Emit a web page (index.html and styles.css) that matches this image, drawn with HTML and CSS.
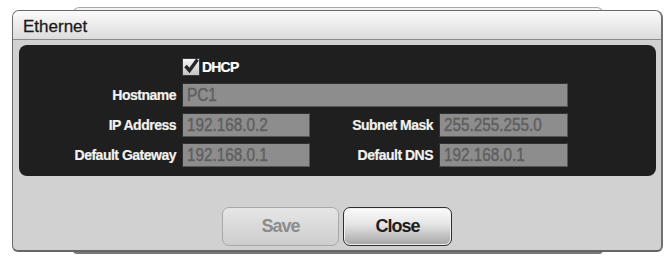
FILE: index.html
```html
<!DOCTYPE html>
<html>
<head>
<meta charset="utf-8">
<link rel="stylesheet" href="styles.css">
</head>
<body>
<div class="desk">
  <div class="backwin"></div>
  <div class="dialog">
    <div class="title">Ethernet</div>
    <div class="body">
      <div class="panel">
        <div class="chk-row">
          <span class="chk">
            <svg width="19" height="19" viewBox="0 0 19 19"><path d="M3.5 9 L7.5 13.5 L15.5 2.5" fill="none" stroke="#262626" stroke-width="3.4" stroke-linejoin="miter"/></svg>
          </span>
          <span class="chk-label">DHCP</span>
        </div>
        <div class="lbl">Hostname</div>
        <div class="field wide"><span class="val">PC1</span></div>
        <div class="lbl">IP Address</div>
        <div class="field"><span class="val">192.168.0.2</span></div>
        <div class="lbl">Subnet Mask</div>
        <div class="field"><span class="val">255.255.255.0</span></div>
        <div class="lbl">Default Gateway</div>
        <div class="field"><span class="val">192.168.0.1</span></div>
        <div class="lbl">Default DNS</div>
        <div class="field"><span class="val">192.168.0.1</span></div>
      </div>
      <div class="buttons">
        <button class="btn save">Save</button>
        <button class="btn close">Close</button>
      </div>
    </div>
  </div>
</div>
</body>
</html>
```

FILE: styles.css
```css
html, body {
  margin: 0;
  padding: 0;
  background: #ffffff;
  font-family: "Liberation Sans", Arial, sans-serif;
}
.desk {
  position: relative;
  width: 671px;
  height: 266px;
  padding-top: 10px;
  box-sizing: border-box;
}
.backwin {
  position: absolute;
  left: 73px;
  top: 7px;
  width: 530px;
  height: 247px;
  box-sizing: border-box;
  border: 1px solid #9a9a9a;
  border-top-color: #a8a8a8;
  border-bottom: 2px solid #777;
  border-radius: 6px 6px 4px 4px;
  background: #f4f4f4;
}
.dialog {
  position: relative;
  margin-left: 12px;
  width: 651px;
  height: 242px;
  box-sizing: border-box;
  border: 1px solid #6a6a6a;
  border-right: 2px solid #707070;
  border-bottom: 2px solid #666;
  border-radius: 7px 8px 6px 6px;
  background: #d1d1d1;
  display: flex;
  flex-direction: column;
  overflow: hidden;
}
.title {
  height: 29px;
  box-sizing: border-box;
  border-bottom: 1px solid #8a8a8a;
  background: linear-gradient(#fbfbfb, #dcdcdc);
  color: #1a1a1a;
  font-size: 17px;
  padding-left: 10px;
  padding-top: 7px;
  line-height: 18px;
  -webkit-text-stroke: 0.3px #1a1a1a;
}
.body {
  flex: 1;
  padding: 5px 5px 0 6px;
  display: flex;
  flex-direction: column;
}
.panel {
  background: #1f1f1f;
  border-radius: 8px;
  height: 131px;
  box-sizing: border-box;
  padding: 11px 0 0 0;
  display: grid;
  grid-template-columns: 157px 128px 117px 129px;
  grid-template-rows: 21px 24px 24px 24px;
  column-gap: 6px;
  row-gap: 6px;
  align-items: center;
}
.chk-row {
  grid-column: 2 / 5;
  display: flex;
  align-items: center;
}
.chk {
  width: 18px;
  height: 18px;
  box-sizing: border-box;
  border: 1px solid #3a3a3a;
  background: linear-gradient(#f6f6f6, #c4c4c4);
  position: relative;
}
.chk svg {
  position: absolute;
  left: -1px;
  top: -2px;
}
.chk-label {
  color: #ffffff;
  font-weight: bold;
  font-size: 14px;
  letter-spacing: -0.8px;
  margin-left: 2px;
  -webkit-text-stroke: 0.2px #ffffff;
}
.panel .lbl {
  text-align: right;
  color: #f2f2f2;
  font-weight: bold;
  font-size: 14px;
  letter-spacing: -0.5px;
  white-space: nowrap;
  -webkit-text-stroke: 0.2px #f2f2f2;
}
.field {
  height: 24px;
  box-sizing: border-box;
  background: #8d8d8d;
  border: 1px solid #303030;
  border-right-color: #555;
  border-bottom-color: #555;
  color: #5f5f5f;
  font-size: 18px;
  line-height: 22px;
  padding-left: 4px;
  white-space: nowrap;
  overflow: hidden;
  -webkit-text-stroke: 0.45px #5f5f5f;
}
.val {
  display: inline-block;
  transform: scaleX(0.85);
  transform-origin: left center;
}
.field.wide {
  grid-column: 2 / 5;
}
.buttons {
  display: flex;
  justify-content: center;
  gap: 4px;
  margin-top: 31px;
  padding-right: 1px;
}
.btn {
  height: 39px;
  border-radius: 7px;
  font-family: "Liberation Sans", Arial, sans-serif;
  font-weight: bold;
  font-size: 18px;
  letter-spacing: -1px;
  padding: 0;
  margin: 0;
}
.save {
  width: 117px;
  border: 1px solid #a8a8a8;
  background: linear-gradient(#e6e6e6, #cdcdcd);
  color: #8c8c8c;
}
.close {
  width: 109px;
  border: 1px solid #2e2e2e;
  background: linear-gradient(#fcfcfc, #e4e4e4 45%, #a5a5a5);
  color: #1c1c1c;
  box-shadow: inset 0 0 0 1px #f0f0f0;
}
```
